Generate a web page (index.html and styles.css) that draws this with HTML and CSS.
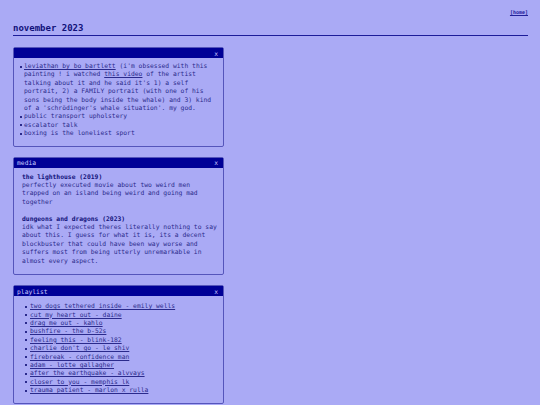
FILE: index.html
```html
<!DOCTYPE html>
<html>
<head>
<meta charset="utf-8">
<link rel="stylesheet" href="styles.css">
</head>
<body>
<div class="page">
  <div class="topnav"><a href="#">[home]</a></div>
  <h1 class="title">november 2023</h1>
  <div class="panels">
    <section class="panel">
      <div class="bar"><span class="bar-title"></span><span class="close">x</span></div>
      <div class="body">
        <ul class="list">
          <li><a href="#">leviathan by bo bartlett</a> (i'm obsessed with this painting ! i watched <a href="#">this video</a> of the artist talking about it and he said it's 1) a self portrait, 2) a FAMILY portrait (with one of his sons being the body inside the whale) and 3) kind of a 'schrödinger's whale situation'. my god.</li>
          <li>public transport upholstery</li>
          <li>escalator talk</li>
          <li>boxing is the loneliest sport</li>
        </ul>
      </div>
    </section>
    <section class="panel">
      <div class="bar"><span class="bar-title">media</span><span class="close">x</span></div>
      <div class="body media">
        <p><b>the lighthouse (2019)</b><br>perfectly executed movie about two weird men trapped on an island being weird and going mad together</p>
        <p><b>dungeons and dragons (2023)</b><br>idk what I expected theres literally nothing to say about this. I guess for what it is, its a decent blockbuster that could have been way worse and suffers most from being utterly unremarkable in almost every aspect.</p>
      </div>
    </section>
    <section class="panel">
      <div class="bar"><span class="bar-title">playlist</span><span class="close">x</span></div>
      <div class="body">
        <ul class="list playlist">
          <li><a href="#">two dogs tethered inside - emily wells</a></li>
          <li><a href="#">cut my heart out - daine</a></li>
          <li><a href="#">drag me out - kahlo</a></li>
          <li><a href="#">bushfire - the b-52s</a></li>
          <li><a href="#">feeling this - blink-182</a></li>
          <li><a href="#">charlie don't go - le shiv</a></li>
          <li><a href="#">firebreak - confidence man</a></li>
          <li><a href="#">adam - lotte gallagher</a></li>
          <li><a href="#">after the earthquake - alvvays</a></li>
          <li><a href="#">closer to you - memphis lk</a></li>
          <li><a href="#">trauma patient - marlon x rulla</a></li>
        </ul>
      </div>
    </section>
  </div>
</div>
</body>
</html>
```
FILE: styles.css
```css
html, body {
  margin: 0;
  padding: 0;
  background: #aaaaf5;
}
body {
  font-family: "DejaVu Sans Mono", "Liberation Mono", monospace;
  color: #2a2a8c;
}
.page {
  padding: 9px 12px 0 13px;
}
.topnav {
  text-align: right;
  font-size: 5px;
  line-height: 7px;
  font-weight: bold;
}
.topnav a {
  color: #22229a;
}
.title {
  margin: 6px 0 0 0;
  font-size: 9px;
  line-height: 12px;
  font-weight: bold;
  color: #11117a;
  border-bottom: 1px solid #1c1c99;
  padding-bottom: 1px;
}
.panels {
  margin-top: 11px;
  width: 211px;
  display: flex;
  flex-direction: column;
  gap: 10px;
}
.panel {
  border: 1px solid #5555bb;
  border-radius: 2px;
  background: #aaaaf5;
}
.bar {
  background: #000096;
  color: #c8c8ff;
  height: 10px;
  display: flex;
  justify-content: space-between;
  align-items: center;
  padding: 0 5px 0 3px;
  font-size: 6.35px;
}
.body {
  font-size: 6.35px;
  line-height: 8.4px;
  padding: 4px 4px 8px 2px;
}
.list {
  margin: 0;
  padding-left: 8px;
  list-style: none;
}
.list li {
  position: relative;
}
.list li::before {
  content: "";
  position: absolute;
  left: -4px;
  top: 3.5px;
  width: 2px;
  height: 2px;
  background: #2a2a8c;
}
.playlist {
  padding-left: 14px;
  padding-top: 2px;
}
.playlist li::before {
  left: -5px;
}
a {
  color: #2a2a8c;
  text-decoration: underline;
}
.media {
  padding: 5px 3px 9px 8px;
}
.media p {
  margin: 0 0 8.4px 0;
}
.media p:last-child {
  margin-bottom: 0;
}
.media b {
  color: #11117a;
}
```
